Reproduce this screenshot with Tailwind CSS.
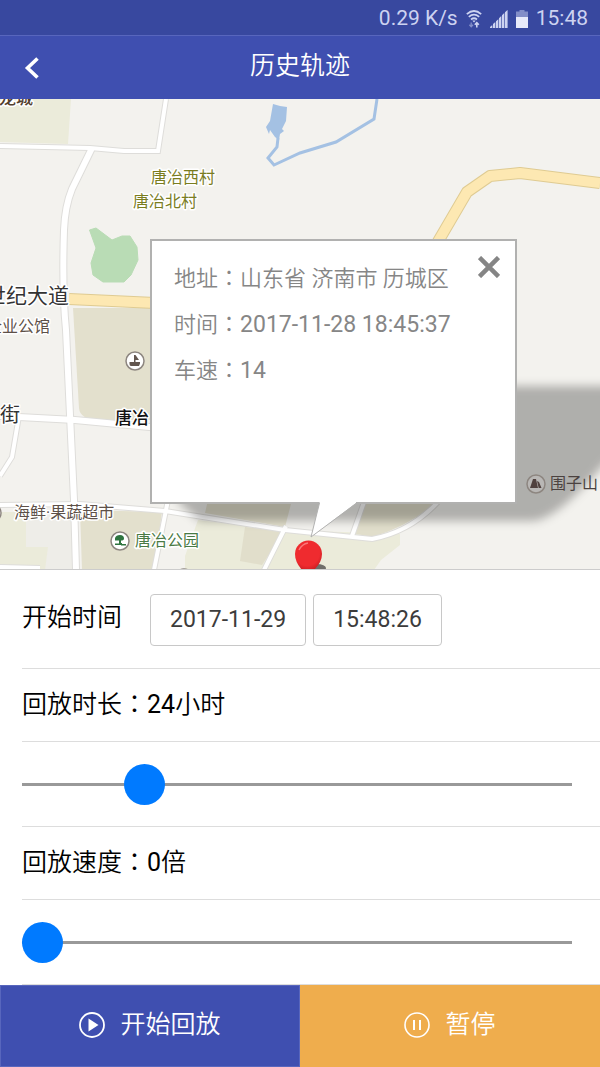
<!DOCTYPE html>
<html lang="zh-CN">
<head>
<meta charset="utf-8">
<meta name="viewport" content="width=device-width, initial-scale=1">
<title>历史轨迹</title>
<script src="https://cdn.jsdelivr.net/npm/@tailwindcss/browser@4"></script>
</head>
<body class="bg-white font-[Roboto,'Noto_Sans_CJK_SC',sans-serif] text-black">
<div class="flex min-h-screen flex-col">

  <!-- Status bar -->
  <div class="flex h-[35px] items-center justify-end gap-2 bg-[#38489f] pt-[2px] pr-3 text-[21px] leading-none text-[#cdd3f1]">
    <span>0.29 K/s</span>
    <svg class="h-[18px] w-4" viewBox="0 0 16 18" fill="none" stroke="currentColor" stroke-width="1.7" aria-hidden="true">
      <path d="M.8 4.2Q8-2.2 15.2 4.2M2.8 6.9Q8 2.4 13.2 6.9M5 9.5Q8 7 11 9.5"/>
      <path d="M6.3 10.6h3.4L8 12.6z" fill="currentColor" stroke="none"/>
      <path d="M5.2 12.5v4M3.400 14.800l1.800 2 1.800-2" stroke-opacity=".5" stroke-width="1.300"/>
      <path d="M10.800 17.500v-4M8.800 14.800l2-2.200 2 2.200" stroke-width="1.600"/>
    </svg>
    <svg class="h-[18px] w-[18px] shrink-0" viewBox="0 0 18 18" fill="currentColor" aria-hidden="true">
      <path d="M0 18v-1l2-1.800V18zM3 18v-4l2-1.800V18zM6 18v-6.800l2-1.800V18zM9 18V8.200l2-1.900V18zM12 18V5.200l2-2V18zM15 18V2.200L17.500 0v18z"/>
      <path d="M0 18 17.500 0v18z" opacity=".35"/>
    </svg>
    <svg class="h-[18px] w-3" viewBox="0 0 12 18" fill="currentColor" aria-hidden="true">
      <path d="M3.500 0h5v1.500H12V7H0V1.500h3.500z" opacity=".5"/><path d="M0 7h12v11H0z" fill="#e8eafa"/>
    </svg>
    <span>15:48</span>
  </div>

  <!-- Title bar -->
  <header class="grid h-16 grid-cols-[1fr_auto_1fr] items-center border-t border-[#5866bd] bg-[#3f4fb0] text-white">
    <button type="button" aria-label="返回" class="flex h-full w-16 items-center justify-center">
      <svg class="h-6 w-4" viewBox="0 0 16 24" fill="none" stroke="currentColor" stroke-width="3.600" aria-hidden="true"><path d="M13.500 2.500 3.500 12l10 9.500"/></svg>
    </button>
    <h1 class="pb-[3px] text-[25px] leading-8 font-[350]">历史轨迹</h1>
  </header>

  <!-- Map -->
  <main class="relative min-h-[471px] flex-1 overflow-hidden border-b border-[#cccccc] bg-[#f3f2ee]">
    <svg class="absolute inset-0 h-full w-full" viewBox="0 99 600 470" preserveAspectRatio="xMidYMid slice" role="img" aria-label="地图">
      <defs>
        <filter id="soft" x="-20%" y="-20%" width="140%" height="140%"><feGaussianBlur stdDeviation="5"/></filter>
        <radialGradient id="red" cx=".45" cy=".4" r=".65"><stop offset=".7" stop-color="#ef2b2f"/><stop offset="1" stop-color="#c91d22"/></radialGradient>
      </defs>
      <path d="M0 99H71L68 144 0 142z" fill="#ebebda"/>
      <path d="M73 308H160V420H100Q80 420 79 408z" fill="#e3e0cd"/>
      <path d="M0 512H78V570H0z" fill="#ebebda"/><path d="M26 512H78V570H45L48 547H26z" fill="#eeede8"/>
      <path d="M80 510 162 512 154 570H82z" fill="#e3e0cd"/>
      <path d="M208 500H292L285 527 205 513z" fill="#e3e0cd"/>
      <path d="M198 520 285 530 400 534V545L381 560 374 570H185V556z" fill="#ebebda"/>
      <path d="M245 527 284 531 262 565 240 561z" fill="#e1decb"/>
      <path d="M363 502H436Q410 526 372 537L352 533z" fill="#e1decb"/>
      <path d="M89.500 230 96 228 112 240 122 236H130L137 247 138 260 131 275 124 282H103L93 275 91 263 96 248z" fill="#b9dcb5" stroke="#b9dcb5" stroke-linejoin="round"/>
      <path d="M278 138 277 147 268 158 274 165 300 153 336 142 374 119 377 99" fill="none" stroke="#a4c1e3" stroke-width="3"/>
      <path d="M273 104 280 106 287 107 286 121 282 129 284 131 280 134 279 140 275 137 270 130 269 134 266 127 270 121z" fill="#a4c1e3"/>

      <g fill="none" stroke="#deddda" stroke-width="6">
        <path d="M0 146 90 148 124 151H158L166 99"/>
        <path d="M92 148 72 189Q65 206 64 230Q62 290 66 330L74 500 76 570" stroke-width="8"/>
        <path d="M0 416 75 420 160 428" stroke-width="8"/><path d="M19 416 12 457 0 476"/>
        <path d="M0 505 80 504 165 511 285 530 372 539Q410 532 438 502"/>
        <path d="M168 500 154 570M364 502 352 536M286 526 264 570M0 567 40 568"/>
      </g>
      <g fill="none" stroke="#fff" stroke-width="4">
        <path d="M0 146 90 148 124 151H158L166 99"/>
        <path d="M92 148 72 189Q65 206 64 230Q62 290 66 330L74 500 76 570" stroke-width="6"/>
        <path d="M0 416 75 420 160 428" stroke-width="6"/><path d="M19 416 12 457 0 476"/>
        <path d="M0 505 80 504 165 511 285 530 372 539Q410 532 438 502"/>
        <path d="M168 500 154 570M364 502 352 536M286 526 264 570M0 567 40 568"/>
      </g>
      <g fill="none" stroke-linejoin="round">
        <path d="M69 299 155 303M436 245 467 192 490 176 520 173 600 183" stroke="#dfcb92" stroke-width="12"/>
        <path d="M69 299 155 303M436 245 467 192 490 176 520 173 600 183" stroke="#fde8b2" stroke-width="10"/>
      </g>

      <path d="M300 386H630V446L604 464Q558 519 533 521H200L176 500z" fill="#000" fill-opacity=".28" filter="url(#soft)"/>

      <g stroke="#fff" stroke-width="3" stroke-linejoin="round" paint-order="stroke" font-family="Roboto,'Noto Sans CJK SC',sans-serif">
        <g font-size="16" fill="#7a7d1f"><text x="151" y="183">唐冶西村</text><text x="133" y="207">唐冶北村</text></g>
        <text x="-18" y="104" font-size="17" fill="#54402d" font-weight="500">恐龙城</text>
        <g fill="#333"><text x="-15" y="303" font-size="21">世纪大道</text><text x="0" y="422" font-size="20">街</text></g>
        <text x="115" y="424" font-size="17" font-weight="500" fill="#111">唐冶</text>
        <g font-size="16" fill="#5d5048"><text x="-14" y="332">企业公馆</text><text x="14" y="518">海鲜·果蔬超市</text></g>
        <text x="135" y="546" font-size="16" fill="#4a7a45">唐冶公园</text>
      </g>
      <text x="550" y="489" font-size="16" fill="#4b4240" font-family="'Noto Sans CJK SC',sans-serif">围子山</text>

      <g stroke="#8d8680" stroke-width="1.500">
        <circle cx="135" cy="361" r="9" fill="#fff"/><circle cx="120" cy="541" r="9" fill="#fff"/>
        <circle cx="536" cy="484" r="9" fill="#b9b7b5"/><circle cx="-8" cy="513" r="9" fill="#fff"/><circle cx="184" cy="578" r="9" fill="#fff"/>
      </g>
      <path d="M134 355h1.500l3.500 5h-3.500v2h4.500v1.500l-1 2.500h-8q-1.500 0-1.500-2v-2h4.500z" fill="#62564f"/>
      <path d="M120 535q4 0 4 3.500 0 2-3 2v2.500h1v2h-7v-1.500h4v-3h-4v-2.500q1-3 5-3zM121 544h5v1.500h-5z" fill="#2f7540"/>
      <path d="M530 488 533 479h3l2 9zM537 481l2 1 2.500 6h-2.800z" fill="#50413e"/>

      <ellipse cx="317" cy="568" rx="9" ry="4" fill="#6f6e6a"/>
      <path d="M295 554a13.500 13.500 0 0 1 27 0q0 8-8 16H302q-7-8-7-16z" fill="url(#red)"/>
      <path d="M299 550q3-6 9-7" fill="none" stroke="#fa7779" stroke-width="1.500"/>
    </svg>

    <!-- Info window over the marker -->
    <section class="absolute top-[140px] left-1/2 -ml-[150px] h-[265px] w-[367px] border-2 border-[#b1b1b0] bg-white pt-[13px] pl-[22px] text-[22px] leading-[45px] font-[350] text-[#868686]">
      <p class="flex h-[46px] items-baseline">地址<span lang="zh-TW" class="font-['Noto_Sans_CJK_TC']">：</span>山东省 济南市 历城区</p>
      <p class="flex h-[46px] items-baseline">时间<span lang="zh-TW" class="font-['Noto_Sans_CJK_TC']">：</span><span class="text-[23px] font-normal">2017-11-28 18:45:37</span></p>
      <p class="flex h-[46px] items-baseline">车速<span lang="zh-TW" class="font-['Noto_Sans_CJK_TC']">：</span><span class="text-[23px] font-normal">14</span></p>
      <button type="button" aria-label="关闭" class="absolute top-[10px] right-[10px] flex h-8 w-8 items-center justify-center text-[#858585]">
        <svg class="h-[22px] w-[22px]" viewBox="0 0 22 22" fill="none" stroke="currentColor" stroke-width="4.500" aria-hidden="true"><path d="M1.500 1.500 20.500 20.500M20.500 1.500 1.500 20.500"/></svg>
      </button>
      <svg class="absolute top-[260px] left-[158px] h-[38px] w-12" viewBox="0 0 48 38" aria-hidden="true">
        <path d="M10 0 1 36 46 2V0z" fill="#fff"/><path d="M9.500 2 1 36 46 2.500" fill="none" stroke="#b1b1b0"/>
      </svg>
    </section>
  </main>

  <!-- Playback settings -->
  <form class="pl-[22px] text-[25px] leading-8">
    <div class="flex h-[99px] items-center border-b border-[#dddddd] pt-[2px]">
      <span class="mr-7 pb-1 font-[350]">开始时间</span>
      <div class="flex gap-[7px] text-[23px] text-[#3c3c3c]">
        <button type="button" aria-label="开始日期 2017-11-29" class="h-[52px] rounded border border-[#c8c8c8] px-[19px]">2017-11-29</button>
        <button type="button" aria-label="开始时刻 15:48:26" class="h-[52px] rounded border border-[#c8c8c8] px-[19px]">15:48:26</button>
      </div>
    </div>
    <div class="flex h-[73px] items-center border-b border-[#dddddd] pb-[3px]">
      <label for="duration" class="font-[350]">回放时长<span lang="zh-TW" class="font-['Noto_Sans_CJK_TC']">：</span><span class="font-normal">24</span>小时</label>
    </div>
    <div class="flex h-[85px] items-center border-b border-[#dddddd] pr-7">
      <input id="duration" type="range" min="0" max="120" value="24" class="h-[41px] w-full appearance-none bg-transparent [&::-webkit-slider-runnable-track]:h-[3px] [&::-webkit-slider-runnable-track]:bg-[#999999] [&::-webkit-slider-thumb]:-mt-[19px] [&::-webkit-slider-thumb]:h-[41px] [&::-webkit-slider-thumb]:w-[41px] [&::-webkit-slider-thumb]:appearance-none [&::-webkit-slider-thumb]:rounded-full [&::-webkit-slider-thumb]:bg-[#007aff]">
    </div>
    <div class="flex h-[73px] items-center border-b border-[#dddddd] pb-[3px]">
      <label for="speed" class="font-[350]">回放速度<span lang="zh-TW" class="font-['Noto_Sans_CJK_TC']">：</span><span class="font-normal">0</span>倍</label>
    </div>
    <div class="flex h-[85px] items-center border-b border-[#dddddd] pr-7">
      <input id="speed" type="range" min="0" max="10" value="0" class="h-[41px] w-full appearance-none bg-transparent [&::-webkit-slider-runnable-track]:h-[3px] [&::-webkit-slider-runnable-track]:bg-[#999999] [&::-webkit-slider-thumb]:-mt-[19px] [&::-webkit-slider-thumb]:h-[41px] [&::-webkit-slider-thumb]:w-[41px] [&::-webkit-slider-thumb]:appearance-none [&::-webkit-slider-thumb]:rounded-full [&::-webkit-slider-thumb]:bg-[#007aff]">
    </div>
  </form>

  <!-- Actions -->
  <footer class="grid h-[82px] grid-cols-2 text-[25px] leading-8 font-[350] text-white">
    <button type="button" class="flex items-center justify-center gap-[15px] border border-[#5866bd] bg-[#3f4fb0] pb-[2px]">
      <svg class="h-[26px] w-[26px]" viewBox="0 0 26 26" aria-hidden="true"><circle cx="13" cy="13" r="12" fill="none" stroke="currentColor" stroke-width="1.800"/><path d="M9.500 6.500 19.500 13l-10 6.500z" fill="currentColor"/></svg>
      开始回放
    </button>
    <button type="button" class="flex items-center justify-center gap-[15px] bg-[#efad4d] pb-[2px]">
      <svg class="h-[26px] w-[26px]" viewBox="0 0 26 26" fill="none" stroke="currentColor" aria-hidden="true"><circle cx="13" cy="13" r="12" stroke-width="1.600"/><path d="M10 8v10M16 8v10" stroke-width="2"/></svg>
      暂停
    </button>
  </footer>
</div>
</body>
</html>
